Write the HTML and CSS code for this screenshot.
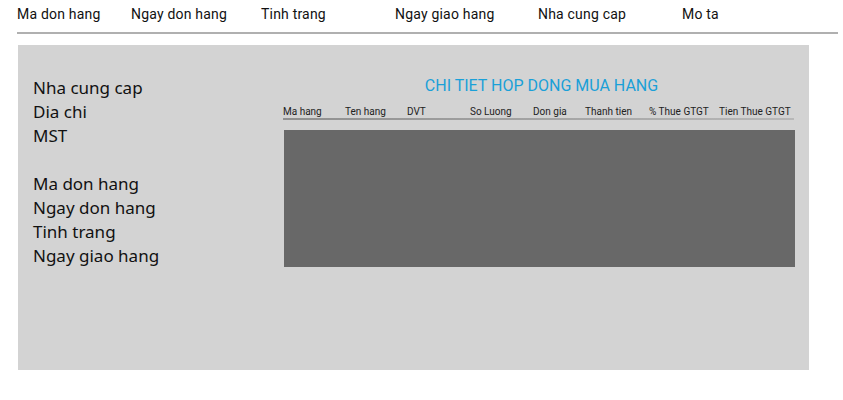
FILE: index.html
```html
<!DOCTYPE html>
<html>
<head>
<meta charset="utf-8">
<link rel="stylesheet" href="styles.css">
</head>
<body>
<div class="topbar">
  <span>Ma don hang</span>
  <span>Ngay don hang</span>
  <span>Tinh trang</span>
  <span>Ngay giao hang</span>
  <span>Nha cung cap</span>
  <span>Mo ta</span>
</div>
<div class="panel">
  <div class="info">
    <div>Nha cung cap</div>
    <div>Dia chi</div>
    <div>MST</div>
    <div class="blank"></div>
    <div>Ma don hang</div>
    <div>Ngay don hang</div>
    <div>Tinh trang</div>
    <div>Ngay giao hang</div>
  </div>
  <div class="detail">
    <div class="title">CHI TIET HOP DONG MUA HANG</div>
    <div class="cols">
      <span>Ma hang</span>
      <span>Ten hang</span>
      <span>DVT</span>
      <span>So Luong</span>
      <span>Don gia</span>
      <span>Thanh tien</span>
      <span>% Thue GTGT</span>
      <span>Tien Thue GTGT</span>
    </div>
    <div class="grid-area"></div>
  </div>
</div>
</body>
</html>
```
FILE: styles.css
```css
html, body {
  margin: 0;
  padding: 0;
  background: #fff;
}
body {
  width: 843px;
  height: 400px;
  overflow: hidden;
  font-family: Roboto, "Liberation Sans", sans-serif;
}
.topbar {
  display: grid;
  grid-template-columns: 114px 130px 134px 143px 144px 1fr;
  margin-left: 17px;
  width: 821px;
  height: 34px;
  padding-top: 5px;
  box-sizing: border-box;
  font-size: 14px;
  letter-spacing: 0.2px;
  line-height: 18px;
  color: #111;
  border-bottom: 2px solid #b0b0b0;
}
.panel {
  margin: 11px 0 0 18px;
  width: 791px;
  height: 325px;
  background: #d3d3d3;
  display: flex;
}
.info {
  width: 249px;
  padding: 31px 0 0 15px;
  font-family: "Noto Sans", "Open Sans", sans-serif;
  font-size: 17px;
  line-height: 24px;
  color: #111;
}
.blank {
  height: 24px;
}
.detail {
  width: 513px;
  padding-top: 31px;
}
.title {
  text-align: center;
  font-size: 16px;
  line-height: 20px;
  color: #1aa0d8;
  padding-left: 6px;
}
.cols {
  display: grid;
  grid-template-columns: 62px 62px 63px 63px 52px 64px 70px 1fr;
  margin-top: 10px;
  font-size: 10px;
  line-height: 12px;
  color: #222;
  width: 511px;
  padding-bottom: 0;
  border-bottom: 2px solid;
  border-image: linear-gradient(to right, #8f8f8f, #b8b8b8) 1;
  margin-left: 1px;
}
.grid-area {
  margin: 10px 0 0 2px;
  width: 511px;
  height: 137px;
  background: #686868;
}
```
